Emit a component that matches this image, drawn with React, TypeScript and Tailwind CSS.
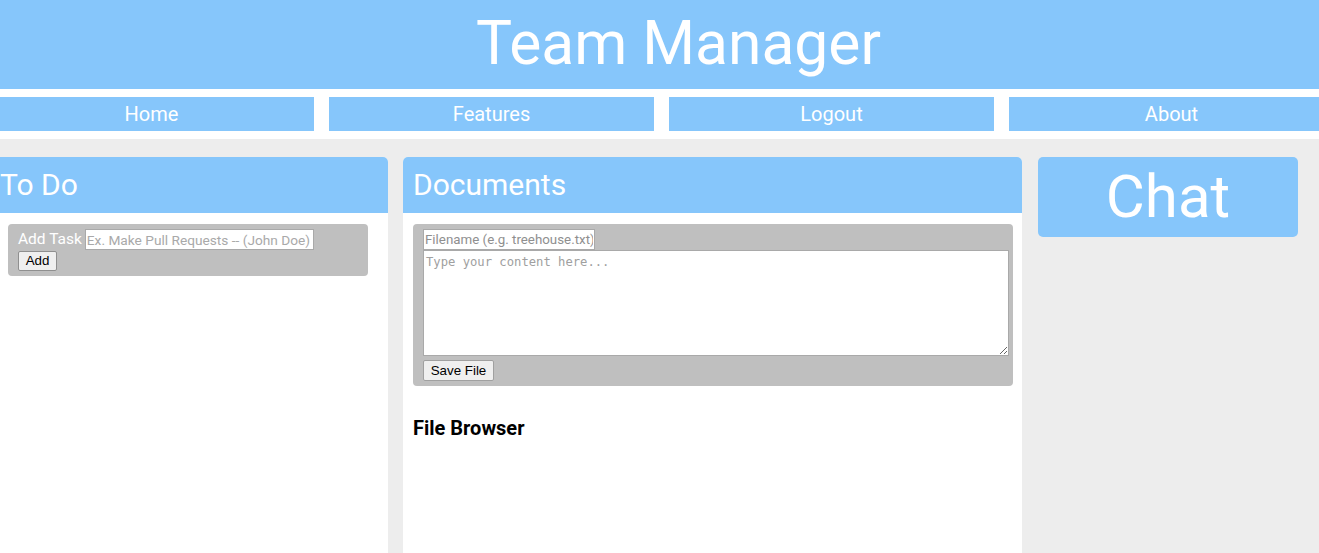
import React from "react";

const blue = "bg-[#86c6fb]";

export default function App() {
  return (
    <div className="w-[1319px] h-[553px] overflow-hidden bg-white" style={{ fontFamily: "Roboto, 'Liberation Sans', sans-serif" }}>
      <div className={`${blue} h-[89px] flex items-center justify-center pl-[38px]`}>
        <h1 className="text-white text-[60.5px] leading-none font-normal">Team Manager</h1>
      </div>
      <nav className="mt-[8px] ml-[-11px] flex gap-[15px] w-[1400px]">
        {["Home", "Features", "Logout", "About"].map((t) => (
          <div key={t} className={`${blue} w-[325px] h-[34px] flex items-center justify-center text-white text-[20px] shrink-0`}>
            {t}
          </div>
        ))}
      </nav>
      <div className="mt-[8px] bg-[#ededed] h-[414px] pt-[18px] flex items-start">
        {/* To Do */}
        <div className="ml-[-10px] w-[398px] h-[500px] bg-white rounded-tr-[5px] shrink-0">
          <div className={`${blue} h-[56px] rounded-tr-[5px] flex items-center pl-[10px]`}>
            <h2 className="text-white text-[30px] leading-none font-normal">To Do</h2>
          </div>
          <div className="ml-[18px] mt-[11px] w-[360px] bg-[#bfbfbf] rounded-[4px] px-[10px] pt-[5px] pb-[5px]">
            <div className="flex items-center h-[21px]">
              <span className="text-white text-[15.5px] leading-none mr-[3px]">Add Task</span>
              <input
                className="w-[229px] h-[21px] bg-white border border-[#a9a9a9] px-[1px] text-[13.7px] placeholder:text-[#a9a9a9] outline-none"
                placeholder="Ex. Make Pull Requests -- (John Doe)"
              />
            </div>
            <button className="mt-[1px] block h-[20px] w-[39px] bg-[#efefef] border border-[#8f8f8f] rounded-[2px] text-[13.33px] text-black leading-none" style={{ fontFamily: "Arial, 'Liberation Sans', sans-serif" }}>
              Add
            </button>
          </div>
        </div>
        {/* Documents */}
        <div className="ml-[15px] w-[619px] h-[500px] bg-white rounded-t-[5px] shrink-0">
          <div className={`${blue} h-[56px] rounded-t-[5px] flex items-center pl-[10px]`}>
            <h2 className="text-white text-[30px] leading-none font-normal">Documents</h2>
          </div>
          <div className="ml-[10px] mt-[11px] w-[600px] h-[162px] bg-[#bfbfbf] rounded-[4px] pl-[10px] pt-[5px]">
            <input
              className="block w-[172px] h-[21px] bg-white border border-[#a9a9a9] px-[1px] text-[13.33px] placeholder:text-[#8f8f8f] outline-none"
              placeholder="Filename (e.g. treehouse.txt)"
            />
            <textarea
              className="block w-[586px] h-[106px] bg-white border border-[#a9a9a9] px-[2px] py-[2px] text-[12.2px] placeholder:text-[#a0a0a0] outline-none"
              style={{ fontFamily: "'DejaVu Sans Mono', 'Liberation Mono', monospace" }}
              placeholder="Type your content here..."
            />
            <button className="mt-[4px] block h-[21px] w-[71px] bg-[#efefef] border border-[#a0a0a0] rounded-[2px] text-[13.33px] text-black leading-none" style={{ fontFamily: "Arial, 'Liberation Sans', sans-serif" }}>
              Save File
            </button>
          </div>
          <h3 className="ml-[10px] mt-[32px] text-[20px] font-bold text-black leading-none">File Browser</h3>
        </div>
        {/* Chat */}
        <div className={`ml-[16px] w-[260px] h-[80px] ${blue} rounded-[5px] flex items-center justify-center shrink-0`}>
          <h2 className="text-white text-[60px] leading-none font-normal">Chat</h2>
        </div>
      </div>
    </div>
  );
}
